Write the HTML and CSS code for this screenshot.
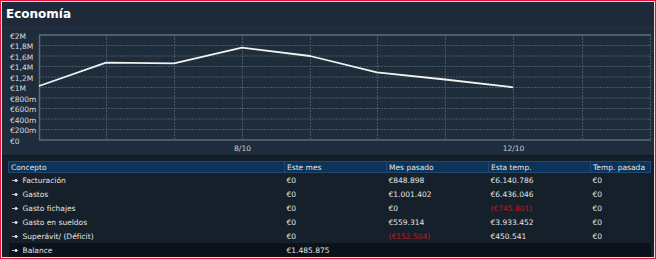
FILE: index.html
```html
<!DOCTYPE html>
<html lang="es">
<head>
    <meta charset="UTF-8">
    <title>Economía</title>
    <link rel="stylesheet" href="styles.css">
</head>
<body>
    <div class="frame">
        <div class="title-bar">Economía</div>

        <svg class="chart" width="652" height="127" viewBox="-1 0 652 127">
            <!-- horizontal grid -->
            <g class="grid-h">
                <line x1="36" y1="17.5" x2="647" y2="17.5"/>
                <line x1="36" y1="28" x2="647" y2="28"/>
                <line x1="36" y1="38.5" x2="647" y2="38.5"/>
                <line x1="36" y1="49" x2="647" y2="49"/>
                <line x1="36" y1="59.5" x2="647" y2="59.5"/>
                <line x1="36" y1="70" x2="647" y2="70"/>
                <line x1="36" y1="80.5" x2="647" y2="80.5"/>
                <line x1="36" y1="91" x2="647" y2="91"/>
                <line x1="36" y1="101.5" x2="647" y2="101.5"/>
            </g>
            <!-- vertical grid -->
            <g class="grid-v">
                <line x1="103.5" y1="7" x2="103.5" y2="112"/>
                <line x1="171.5" y1="7" x2="171.5" y2="112"/>
                <line x1="239.5" y1="7" x2="239.5" y2="112"/>
                <line x1="307.5" y1="7" x2="307.5" y2="112"/>
                <line x1="374.5" y1="7" x2="374.5" y2="112"/>
                <line x1="442.5" y1="7" x2="442.5" y2="112"/>
                <line x1="510.5" y1="7" x2="510.5" y2="112"/>
                <line x1="579.5" y1="7" x2="579.5" y2="112"/>
                <line x1="647.5" y1="7" x2="647.5" y2="112"/>
            </g>
            <!-- frame of the plot -->
            <g class="axis">
                <line x1="36" y1="7" x2="648" y2="7"/>
                <line x1="36" y1="112" x2="648" y2="112"/>
                <line x1="36.5" y1="7" x2="36.5" y2="112"/>
            </g>

            <polyline class="series" points="36,58 103,34.7 171,35.3 239,19.7 307,28 374,44.3 442,51.5 510,59.3"/>

            <g class="y-labels">
                <text x="7" y="10.5">€2M</text>
                <text x="7" y="21">€1,8M</text>
                <text x="7" y="31.5">€1,6M</text>
                <text x="7" y="42">€1,4M</text>
                <text x="7" y="52.5">€1,2M</text>
                <text x="7" y="63">€1M</text>
                <text x="7" y="73.5">€800m</text>
                <text x="7" y="84">€600m</text>
                <text x="7" y="94.5">€400m</text>
                <text x="7" y="105">€200m</text>
                <text x="7" y="115.5">€0</text>
            </g>
            <g class="x-labels">
                <text x="239.5" y="122.5">8/10</text>
                <text x="510.5" y="122.5">12/10</text>
            </g>
        </svg>

        <div class="table-wrap">
            <table class="ledger">
                <thead>
                    <tr>
                        <th class="col-concept">Concepto</th>
                        <th class="col-num">Este mes</th>
                        <th class="col-num">Mes pasado</th>
                        <th class="col-num">Esta temp.</th>
                        <th class="col-last">Temp. pasada</th>
                    </tr>
                </thead>
                <tbody>
                    <tr>
                        <td><span class="bullet"></span>Facturación</td>
                        <td>€0</td>
                        <td>€848.898</td>
                        <td>€6.140.786</td>
                        <td>€0</td>
                    </tr>
                    <tr>
                        <td><span class="bullet"></span>Gastos</td>
                        <td>€0</td>
                        <td>€1.001.402</td>
                        <td>€6.436.046</td>
                        <td>€0</td>
                    </tr>
                    <tr>
                        <td><span class="bullet"></span>Gasto fichajes</td>
                        <td>€0</td>
                        <td>€0</td>
                        <td class="neg">(€745.801)</td>
                        <td>€0</td>
                    </tr>
                    <tr>
                        <td><span class="bullet"></span>Gasto en sueldos</td>
                        <td>€0</td>
                        <td>€559.314</td>
                        <td>€3.933.452</td>
                        <td>€0</td>
                    </tr>
                    <tr>
                        <td><span class="bullet"></span>Superávit/ (Déficit)</td>
                        <td>€0</td>
                        <td class="neg">(€152.504)</td>
                        <td>€450.541</td>
                        <td>€0</td>
                    </tr>
                    <tr class="total">
                        <td><span class="bullet"></span>Balance</td>
                        <td>€1.485.875</td>
                        <td></td>
                        <td></td>
                        <td></td>
                    </tr>
                </tbody>
            </table>
        </div>
    </div>
</body>
</html>
```

FILE: styles.css
```css
body {
    margin: 0;
    background-color: #1f2b3b;
    font-family: "DejaVu Sans", Verdana, sans-serif;
}
.frame {
    width: 652px;
    height: 255px;
    border: 1px solid #e0153a;
    box-shadow: inset 0 0 0 1px #f3d6dc;
    padding: 1px;
    background-color: #1f2b3b;
    display: flex;
    flex-direction: column;
}
.title-bar {
    height: 25px;
    flex-shrink: 0;
    padding-left: 4px;
    font-size: 12px;
    font-weight: bold;
    line-height: 24px;
    color: #ffffff;
    background-color: #1e2a39;
    border-bottom: 1px solid #243244;
}
.chart {
    display: block;
    flex-shrink: 0;
    background-color: #1f2c3c;
}
.grid-h line,
.grid-v line {
    stroke: #4a5767;
    stroke-width: 1;
    stroke-dasharray: 2 1;
}
.axis line {
    stroke: #5f6b79;
    stroke-width: 1.5;
}
.series {
    fill: none;
    stroke: #f2f2f2;
    stroke-width: 1.8;
    stroke-linejoin: round;
}
.y-labels text {
    font-size: 7.5px;
    fill: #dcdcdc;
}
.x-labels text {
    font-size: 7.5px;
    fill: #c8ccd2;
    text-anchor: middle;
}
.table-wrap {
    flex: 1;
    overflow: hidden;
    background-color: #16202b;
    border-top: 2px solid #121a24;
    padding: 4px 0 0 6px;
}
.ledger {
    width: 643px;
    border-collapse: collapse;
    table-layout: fixed;
    font-size: 7.5px;
    color: #e4e4e4;
}
.ledger th {
    height: 10px;
    padding: 0 2px;
    text-align: left;
    font-weight: normal;
    background-color: #0c3359;
    border: 1px solid #1f4970;
    white-space: nowrap;
}
.col-concept { width: 271px; }
.col-num { width: 97px; }
.ledger td {
    height: 13px;
    padding: 1px 2px 0;
    white-space: nowrap;
}
.ledger td:first-child {
    padding-left: 3px;
}
.bullet {
    display: inline-block;
    width: 6px;
    height: 3px;
    margin-right: 5px;
    vertical-align: 1px;
    background:
        radial-gradient(ellipse 2px 1.5px at 4px 1.5px, #cfcfcf 85%, transparent 100%),
        linear-gradient(#bdbdbd, #bdbdbd) 0 1px / 3px 1px no-repeat;
}
.neg {
    color: #c8141e;
}
.total td {
    background-color: #0b121b;
}
```
